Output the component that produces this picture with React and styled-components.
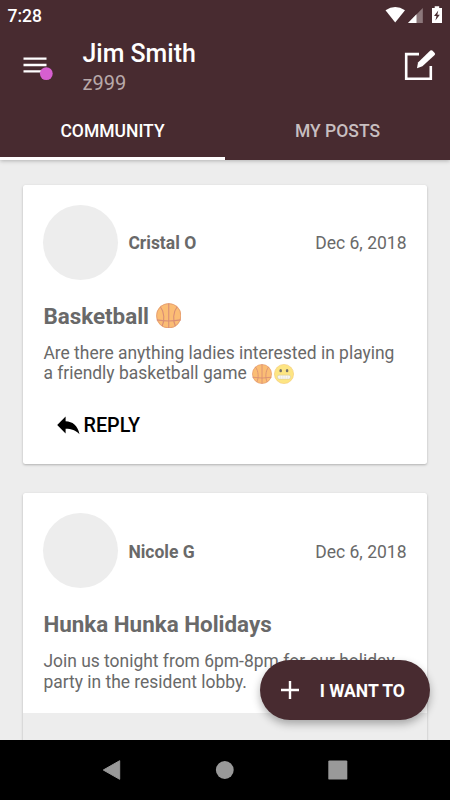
import React from 'react';
import styled, { createGlobalStyle } from 'styled-components';

const posts = [
  {
    author: 'Cristal O',
    date: 'Dec 6, 2018',
    title: 'Basketball',
    titleBall: true,
    lines: ['Are there anything ladies interested in playing', 'a friendly basketball game'],
    emojis: true,
  },
  {
    author: 'Nicole G',
    date: 'Dec 6, 2018',
    title: 'Hunka Hunka Holidays',
    lines: ['Join us tonight from 6pm-8pm for our holiday', 'party in the resident lobby.'],
    image: true,
  },
];

const Basketball = ({ size }) => (
  <Emoji width={size} height={size} viewBox='0 0 26 26'>
    <circle cx='13' cy='13' r='12.8' fill='#fbbd74' />
    <g fill='none' stroke='#d88d76' strokeWidth='1.1'>
      <path d='M13 0.4V25.6M0.8 17.2Q13 19.4 25.2 17.2' />
      <path d='M4.4 3.8C8.6 9 9 18 6.2 23.6M21.6 3.8C17.4 9 17 18 19.8 23.6' />
      <circle cx='13' cy='13' r='12.4' strokeWidth='.6' />
    </g>
  </Emoji>
)

const Grimace = ({ size }) => (
  <Emoji width={size} height={size} viewBox='0 0 20 20'>
    <circle cx='10' cy='10' r='9.6' fill='#fde583' stroke='#f3c873' strokeWidth='.6' />
    <ellipse cx='6.7' cy='6.7' rx='1.3' ry='1.6' fill='#77726a' />
    <ellipse cx='13.1' cy='6.7' rx='1.3' ry='1.6' fill='#77726a' />
    <rect x='3.6' y='11.2' width='12.8' height='3.8' rx='1.4' fill='#fff' stroke='#c9bf9c' strokeWidth='.5' />
    <path d='M4 13.1H16M6.4 11.5V14.8M8.8 11.5V14.8M11.2 11.5V14.8M13.6 11.5V14.8' stroke='#ddd6c4' strokeWidth='.4' />
  </Emoji>
)

const Post = ({ post }) => (
  <Card>
    <CardBody>
      <Author>
        <Avatar />
        <Name>{post.author}</Name>
        <PostDate>{post.date}</PostDate>
      </Author>
      <PostTitle>
        {post.title}
        {post.titleBall && <Basketball size={25.5} />}
      </PostTitle>
      <Message>
        <p>{post.lines[0]}</p>
        <p>
          {post.lines[1]}
          {post.emojis && <><Basketball size={20} /><Grimace size={20} /></>}
        </p>
      </Message>
    </CardBody>
    {post.image ? <PostImage /> : (
      <Reply>
        <svg width='23' height='19' viewBox='0 0 23 19'>
          <path d='M8.6 .5V5.3C15.5 5.6 20.6 9.2 22.5 18.3C18.7 14.2 14.5 12.8 8.6 12.8V17.5L.2 9Z' />
        </svg>
        <span>REPLY</span>
      </Reply>
    )}
  </Card>
)

const App = () => {
  return (
    <Screen>
      <GlobalStyle />
      <Header>
        <StatusBar>
          <span>7:28</span>
          <svg width='60' height='20' viewBox='385 5 60 20'>
            <path d='M385.5 10.2Q395.2 3.8 405 10.2L395.2 22.4Z' fill='#fff' />
            <path d='M422.8 8V23H408Z' fill='#8c787b' />
            <path d='M416.5 14.3V23H408Z' fill='#fff' />
            <path d='M434.7 6.3H439.2V8.1H442V23H432V8.1H434.7Z' fill='#fff' />
            <path d='M438.3 10.5L434 16H436.5L435.4 20.6L439.8 14.7H437.3Z' fill='#482b30' />
          </svg>
        </StatusBar>
        <TitleBar>
          <MenuButton>
            <svg width='30' height='26' viewBox='23 55 30 26'>
              <path d='M23.5 58.6H46.5M23.5 65H46.5M23.5 71.4H46.5' stroke='#fff' strokeWidth='2.4' />
              <circle cx='46.3' cy='73.6' r='6.4' fill='#d75fd0' />
            </svg>
          </MenuButton>
          <Heading>
            <h1>Jim Smith</h1>
            <h2>z999</h2>
          </Heading>
          <svg width='32' height='32' viewBox='404 49 32 32'>
            <path d='M419 54.1H406.2V78.8H430.8V66' fill='none' stroke='#fff' strokeWidth='2.6' />
            <path d='M417 68.2L418 62.5L430.3 50.6Q431.3 49.7 432.3 50.6L434.7 53Q435.6 54 434.7 54.9L422.4 66.2Z' fill='#fff' />
          </svg>
        </TitleBar>
        <Tabs>
          <Tab $active>COMMUNITY</Tab>
          <Tab>MY POSTS</Tab>
        </Tabs>
      </Header>
      <Feed>
        {posts.map((post) => (
          <Post key={post.author} post={post} />
        ))}
      </Feed>
      <Fab>
        <svg width='18' height='18' viewBox='0 0 18 18'>
          <path d='M9 0V18M0 9H18' stroke='#fff' strokeWidth='2.4' />
        </svg>
        <span>I WANT TO</span>
      </Fab>
      <NavBar>
        <svg width='20' height='20' viewBox='0 0 20 20'>
          <path d='M.3 10L16.7 .7V19.3Z' fill='#999' stroke='#999' strokeWidth='1' strokeLinejoin='round' />
        </svg>
        <svg width='20' height='20' viewBox='0 0 20 20'>
          <circle cx='9.8' cy='10' r='8.9' fill='#999' />
        </svg>
        <svg width='20' height='20' viewBox='0 0 20 20'>
          <rect x='.3' y='.4' width='19' height='19.2' rx='1.2' fill='#999' />
        </svg>
      </NavBar>
    </Screen>
  )
}
export default App;

const GlobalStyle = createGlobalStyle`
  *{
    box-sizing: border-box;
    margin: 0;
    padding: 0;
  }
  body{
    font-family: Roboto, sans-serif;
    overflow: hidden;
  }
  svg{
    display: block;
    flex-shrink: 0;
  }
`
const Screen = styled.div`
  position: relative;
  width: 450px;
  height: 800px;
  display: flex;
  flex-direction: column;
  overflow: hidden;
  background: #ededed;
`
const Header = styled.header`
  height: 160px;
  flex-shrink: 0;
  display: flex;
  flex-direction: column;
  color: white;
  background: #482b30;
  box-shadow: 0 1px 4px rgba(0, 0, 0, .25);
  z-index: 1;
`
const StatusBar = styled.div`
  height: 30px;
  display: flex;
  align-items: center;
  justify-content: space-between;
  padding: 0 5px 0 7.5px;
  font-size: 17.5px;
  font-weight: 500;
  span{
    padding-top: 2px;
  }
`
const TitleBar = styled.div`
  height: 70px;
  display: flex;
  align-items: center;
  padding: 0 14px 0 23px;
`
const MenuButton = styled.div`
  width: 59.5px;
  padding-top: 6px;
`
const Heading = styled.div`
  flex: 1;
  padding-top: 6px;
  h1{
    font-size: 24.9px;
    line-height: 30px;
    font-weight: 500;
  }
  h2{
    font-size: 20px;
    line-height: 28px;
    font-weight: 400;
    color: #b8a9aa;
  }
`
const Tabs = styled.div`
  flex: 1;
  display: flex;
`
const Tab = styled.div`
  flex: 1;
  display: flex;
  align-items: center;
  justify-content: center;
  padding-top: 5px;
  font-size: 17.5px;
  font-weight: 500;
  color: ${props => props.$active ? 'white' : '#c8bfc0'};
  border-bottom: 3px solid ${props => props.$active ? 'white' : 'transparent'};
`
const Feed = styled.main`
  flex: 1;
  min-height: 0;
  display: flex;
  flex-direction: column;
  gap: 29px;
  padding: 24.5px 23.5px 0 23.4px;
  overflow: hidden;
`
const Card = styled.article`
  height: 279.5px;
  flex-shrink: 0;
  background: white;
  border-radius: 2.5px;
  box-shadow: 0 1px 2.5px rgba(0, 0, 0, .26);
`
const CardBody = styled.div`
  padding: 20px 20px 0;
  color: #696969;
`
const Author = styled.div`
  height: 75px;
  display: flex;
  align-items: center;
`
const Avatar = styled.div`
  width: 75px;
  height: 75px;
  margin-right: 10px;
  border-radius: 50%;
  background: #ededed;
`
const Name = styled.div`
  flex: 1;
  padding-top: 2px;
  font-size: 17.5px;
  font-weight: 700;
`
const PostDate = styled.div`
  padding-top: 2px;
  font-size: 17.5px;
`
const PostTitle = styled.h3`
  height: 30px;
  margin-top: 21px;
  display: flex;
  align-items: center;
  gap: 6.6px;
  font-size: 22.4px;
  font-weight: 700;
`
const Message = styled.div`
  margin-top: 12.3px;
  font-size: 17.46px;
  line-height: 20.5px;
  white-space: nowrap;
  p{
    height: 20.5px;
    display: flex;
    align-items: center;
  }
`
const Emoji = styled.svg`
  p &{
    margin-left: 2px;
  }
  p &:first-of-type{
    margin-left: 5.2px;
  }
`
const Reply = styled.div`
  display: flex;
  align-items: center;
  gap: 3.4px;
  margin-top: 28.7px;
  padding-left: 33.7px;
  font-size: 19.8px;
  line-height: 24px;
  font-weight: 500;
  color: black;
  span{
    padding-top: 2px;
  }
`
const PostImage = styled.div`
  height: 60px;
  margin-top: 20.5px;
  background: #ededed;
`
const Fab = styled.div`
  position: absolute;
  left: 259.7px;
  top: 660px;
  width: 170.3px;
  height: 60px;
  display: flex;
  align-items: center;
  gap: 21px;
  padding-left: 21px;
  border-radius: 30px;
  font-size: 17.5px;
  font-weight: 700;
  color: white;
  background: #482b30;
  box-shadow: 0 4px 9px rgba(0, 0, 0, .3);
  span{
    padding-top: 2px;
  }
`
const NavBar = styled.nav`
  height: 60px;
  flex-shrink: 0;
  display: flex;
  align-items: center;
  justify-content: center;
  gap: 92.5px;
  background: black;
  z-index: 1;
`
